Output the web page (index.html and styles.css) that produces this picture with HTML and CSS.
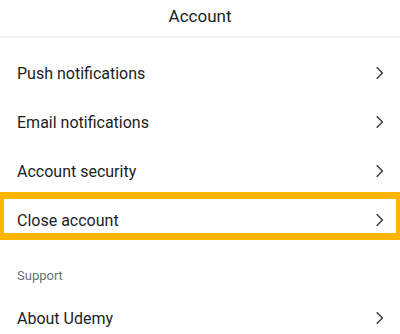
FILE: index.html
```html
<!DOCTYPE html>
<html lang="en">
<head>
<meta charset="utf-8">
<title>Account</title>
<link rel="stylesheet" href="styles.css">
</head>
<body>
<div class="screen">
  <header class="topbar"><h1 class="title">Account</h1></header>
  <ul class="list">
    <li class="row"><span class="label">Push notifications</span><svg class="chev" width="8" height="12" viewBox="0 0 8 12"><path d="M1.2 0.8 L6.4 6 L1.2 11.2" /></svg></li>
    <li class="row"><span class="label">Email notifications</span><svg class="chev" width="8" height="12" viewBox="0 0 8 12"><path d="M1.2 0.8 L6.4 6 L1.2 11.2" /></svg></li>
    <li class="row"><span class="label">Account security</span><svg class="chev" width="8" height="12" viewBox="0 0 8 12"><path d="M1.2 0.8 L6.4 6 L1.2 11.2" /></svg></li>
    <li class="row row-highlight"><span class="label">Close account</span><svg class="chev" width="8" height="12" viewBox="0 0 8 12"><path d="M1.2 0.8 L6.4 6 L1.2 11.2" /></svg></li>
  </ul>
  <div class="section-title">Support</div>
  <ul class="list-plain">
    <li class="row"><span class="label">About Udemy</span><svg class="chev" width="8" height="12" viewBox="0 0 8 12"><path d="M1.2 0.8 L6.4 6 L1.2 11.2" /></svg></li>
  </ul>
</div>
</body>
</html>
```
FILE: styles.css
```css
* { box-sizing: border-box; }
html, body { margin: 0; padding: 0; background: #fff; }
body {
  font-family: Roboto, "Liberation Sans", Arial, sans-serif;
  color: #1c1d1f;
  overflow: hidden;
}
.screen { width: 400px; height: 334px; overflow: hidden; }
.topbar {
  height: 38px;
  border-bottom: 2px solid #f2f2f2;
  display: flex;
  justify-content: center;
}
.title {
  margin: 0;
  font-size: 17px;
  font-weight: 400;
  line-height: 32px;
}
.list, .list-plain { list-style: none; margin: 0; padding: 0; }
.list { padding-top: 10.5px; }
.row {
  height: 49px;
  padding: 0 16px 0 17px;
  display: flex;
  align-items: center;
  justify-content: space-between;
  font-size: 16px;
  position: relative;
}
.chev { fill: none; stroke: #3e4143; stroke-width: 1.6; stroke-linecap: round; stroke-linejoin: round; }
.row-highlight::after {
  content: "";
  position: absolute;
  left: -3px;
  right: -3px;
  top: -3.5px;
  bottom: 4.5px;
  border: 7px solid #ffb400;
}
.section-title {
  padding: 21.5px 17px 7.5px;
  line-height: 20px;
  font-size: 13px;
  color: #6a6f73;
}
```
